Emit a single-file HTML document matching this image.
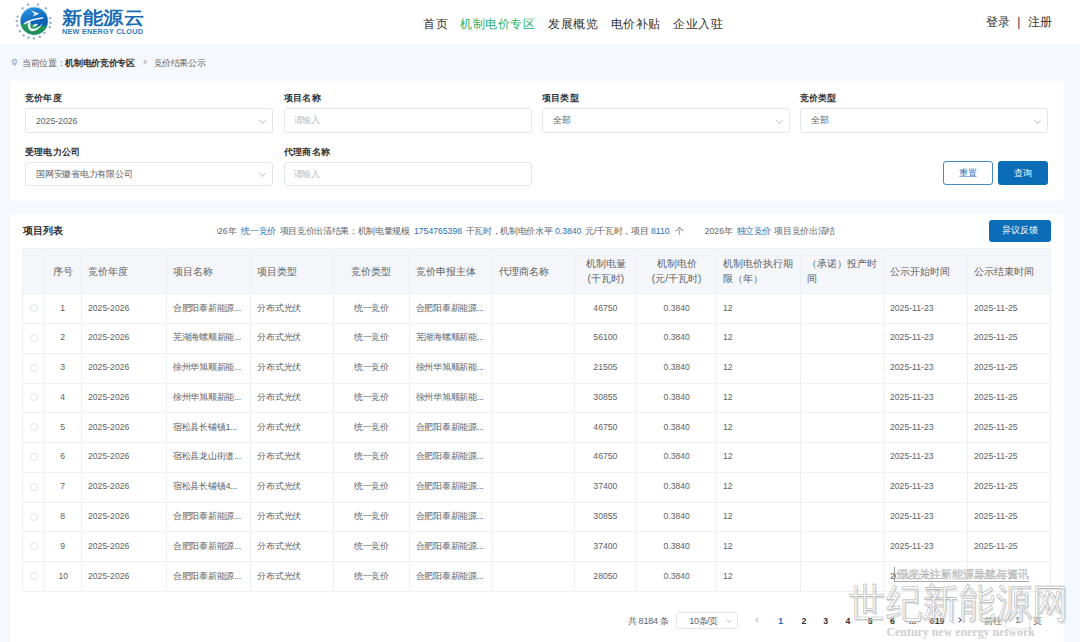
<!DOCTYPE html><html><head><meta charset="utf-8"><style>
*{margin:0;padding:0;box-sizing:border-box}
html,body{width:1080px;height:642px;overflow:hidden}
body{background:#f5f8fc;font-family:"Liberation Sans",sans-serif;color:#606266;position:relative}
.a{position:absolute;white-space:nowrap}
.card{position:absolute;background:#fff;border-radius:3px}
.lab{position:absolute;font-size:9px;letter-spacing:0.15px;font-weight:bold;color:#303133;line-height:12px;white-space:nowrap}
.inp{position:absolute;height:24.5px;border:1px solid #e2e6ec;border-radius:3px;background:#fff}
.inp>span{position:absolute;left:10px;top:0;line-height:22.5px;font-size:9px;letter-spacing:-0.25px;color:#606266;white-space:nowrap}
.inp>span.ph{color:#b8bcc4;left:8.5px}
.arr{position:absolute;right:7px;top:8.5px;width:5px;height:5px;border-right:1px solid #c8ccd4;border-bottom:1px solid #c8ccd4;transform:rotate(45deg)}
.th{position:absolute;top:249.3px;height:45px;font-size:10px;color:#606266;line-height:14.5px;display:flex;align-items:center;white-space:normal}
.td{position:absolute;height:29.77px;font-size:8.6px;color:#606266;line-height:29px;white-space:nowrap;overflow:hidden}
.cj{font-size:9px;letter-spacing:-0.26px}
.nm{display:inline-block;font-size:9.6px;transform:translateY(-0.6px) scaleX(0.9);transform-origin:0 50%}
.nmc{display:inline-block;font-size:9.6px;transform:translateY(-0.6px) scaleX(0.9);transform-origin:50% 50%}
.blue{color:#1f6fb8}
</style></head><body>

<div class="a" style="left:0;top:0;width:1080px;height:44px;background:#fff"></div>
<svg class="a" style="left:0;top:0" width="60" height="44" viewBox="0 0 60 44"><defs><linearGradient id="lg" x1="0.2" y1="0" x2="0.6" y2="1"><stop offset="0" stop-color="#2b9ae6"/><stop offset="0.6" stop-color="#0c5fb2"/></linearGradient><linearGradient id="lg2" x1="0" y1="0" x2="0" y2="1"><stop offset="0" stop-color="#23a05a"/><stop offset="1" stop-color="#1b8a4a"/></linearGradient><clipPath id="cc"><circle cx="34.2" cy="21" r="13.6"/></clipPath></defs><rect x="26.9" y="3.5" width="2.2" height="2.2" rx="0.6" fill="#7f9dbd" opacity="0.85"/><rect x="36.9" y="3.5" width="2.2" height="2.2" rx="0.6" fill="#7f9dbd" opacity="0.85"/><rect x="21.4" y="7.2" width="2.2" height="2.2" rx="0.6" fill="#7f9dbd" opacity="0.85"/><rect x="44.7" y="7.2" width="2.2" height="2.2" rx="0.6" fill="#7f9dbd" opacity="0.85"/><rect x="16.5" y="15.4" width="2.2" height="2.2" rx="0.6" fill="#7f9dbd" opacity="0.85"/><rect x="15.7" y="19.9" width="2.2" height="2.2" rx="0.6" fill="#7f9dbd" opacity="0.85"/><rect x="16.3" y="24.4" width="2.2" height="2.2" rx="0.6" fill="#7f9dbd" opacity="0.85"/><rect x="18.7" y="30.1" width="2.2" height="2.2" rx="0.6" fill="#7f9dbd" opacity="0.85"/><rect x="22.5" y="34.2" width="2.2" height="2.2" rx="0.6" fill="#7f9dbd" opacity="0.85"/><rect x="27.4" y="36.5" width="2.2" height="2.2" rx="0.6" fill="#7f9dbd" opacity="0.85"/><rect x="32.9" y="37.2" width="2.2" height="2.2" rx="0.6" fill="#7f9dbd" opacity="0.85"/><rect x="38.7" y="35.7" width="2.2" height="2.2" rx="0.6" fill="#7f9dbd" opacity="0.85"/><rect x="43.4" y="31.9" width="2.2" height="2.2" rx="0.6" fill="#7f9dbd" opacity="0.85"/><rect x="49.1" y="16.9" width="2.2" height="2.2" rx="0.6" fill="#7f9dbd" opacity="0.85"/><rect x="49.4" y="21.7" width="2.2" height="2.2" rx="0.6" fill="#7f9dbd" opacity="0.85"/><rect x="48.7" y="26.1" width="2.2" height="2.2" rx="0.6" fill="#7f9dbd" opacity="0.85"/><circle cx="34.2" cy="21" r="14.4" fill="#bfe0f5"/><g clip-path="url(#cc)"><rect x="20" y="7" width="29" height="29" fill="url(#lg)"/><path d="M20 24.5 C26 22.5, 31 23.5, 36 25.5 C41 27.5, 45 26, 49 24 L49 36 L20 36 Z" fill="url(#lg2)"/></g><path d="M30.8 10.2 L39.2 13.8 L32.6 16.4 L34.6 13.9 Z" fill="#f2f8fc"/><path d="M23.6 23.4 C28 19.8, 36 18, 43.5 17.2 L43 18.8 C36 19.6, 29 21.5, 25 24.6 Z" fill="#f2f8fc"/><path d="M28.5 21.8 C27.2 25, 27.6 29.5, 31 30.9 C35 32.4, 40.5 28, 42.8 23.2 C40 26.5, 36 29.2, 32.6 28.6 C30.2 28.1, 29.8 25.2, 30.6 22.4 Z" fill="#f2f8fc"/><path d="M32.8 25.4 C34.5 23.5, 37.5 23.2, 38.2 24.2 C37 25.8, 34.5 27, 33 26.8 Z" fill="#f2f8fc" opacity="0.9"/></svg>
<div class="a" style="left:62.3px;top:5.6px;font-size:20px;letter-spacing:0.6px;font-weight:900;color:#1b6db3;line-height:26px;transform:scaleY(0.89);transform-origin:0 0">新能源云</div>
<div class="a" style="left:62px;top:27px;font-size:7.3px;font-weight:bold;color:#2a7bc0;line-height:9px;letter-spacing:0.22px">NEW ENERGY CLOUD</div>
<div class="a" style="left:423.0px;top:15.3px;font-size:12px;letter-spacing:0.5px;line-height:18px;color:#333">首页</div>
<div class="a" style="left:460.1px;top:15.3px;font-size:12px;letter-spacing:0.5px;line-height:18px;color:#27b36b">机制电价专区</div>
<div class="a" style="left:548.4px;top:15.3px;font-size:12px;letter-spacing:0.5px;line-height:18px;color:#333">发展概览</div>
<div class="a" style="left:610.6px;top:15.3px;font-size:12px;letter-spacing:0.5px;line-height:18px;color:#333">电价补贴</div>
<div class="a" style="left:673.4px;top:15.3px;font-size:12px;letter-spacing:0.5px;line-height:18px;color:#333">企业入驻</div>
<div class="a" style="left:986px;top:13px;font-size:12px;line-height:18px;color:#333">登录 <span style="margin:0 4px">|</span> 注册</div>
<svg class="a" style="left:10.5px;top:57.5px" width="7" height="9" viewBox="0 0 7 9"><path d="M3.5 0.6 C1.8 0.6 0.6 1.9 0.6 3.5 C0.6 5.4 3.5 8.4 3.5 8.4 C3.5 8.4 6.4 5.4 6.4 3.5 C6.4 1.9 5.2 0.6 3.5 0.6 Z" fill="#b4c2d8"/><circle cx="3.5" cy="3.5" r="1.1" fill="#f5f8fc"/></svg>
<div class="a" style="left:22px;top:57px;font-size:9px;letter-spacing:-0.34px;line-height:12px;color:#666">当前位置：<b style="color:#333">机制电价竞价专区</b></div>
<div class="a" style="left:142px;top:60px;width:4px;height:4px;border-right:1px solid #aaa;border-top:1px solid #aaa;transform:rotate(45deg)"></div>
<div class="a" style="left:153.5px;top:57px;font-size:9px;letter-spacing:-0.34px;line-height:12px;color:#666">竞价结果公示</div>
<div class="card" style="left:10px;top:81px;width:1054px;height:120px"></div>
<div class="lab" style="left:25.2px;top:92px">竞价年度</div>
<div class="inp" style="left:25.2px;top:108px;width:248px"><span class=""><span class="nm" style="font-size:9.6px;letter-spacing:0;transform:translateY(0.5px) scaleX(0.9)">2025-2026</span></span><i class="arr"></i></div>
<div class="lab" style="left:284.1px;top:92px">项目名称</div>
<div class="inp" style="left:284.1px;top:108px;width:248px"><span class="ph">请输入</span></div>
<div class="lab" style="left:542.1px;top:92px">项目类型</div>
<div class="inp" style="left:542.1px;top:108px;width:248px"><span class="">全部</span><i class="arr"></i></div>
<div class="lab" style="left:800.0px;top:92px">竞价类型</div>
<div class="inp" style="left:800.0px;top:108px;width:248px"><span class="">全部</span><i class="arr"></i></div>
<div class="lab" style="left:25.2px;top:145.7px">受理电力公司</div>
<div class="inp" style="left:25.2px;top:161.5px;width:248px"><span class="">国网安徽省电力有限公司</span><i class="arr"></i></div>
<div class="lab" style="left:284.1px;top:145.7px">代理商名称</div>
<div class="inp" style="left:284.1px;top:161.5px;width:248px"><span class="ph">请输入</span></div>
<div class="a" style="left:943.4px;top:161.3px;width:49.7px;height:24px;border:1px solid #4a88c4;border-radius:3px;background:#fff;color:#1f6fb8;font-size:8.8px;line-height:22px;text-align:center">重置</div>
<div class="a" style="left:998px;top:161.3px;width:50px;height:24px;border-radius:3px;background:#0b6db8;color:#fff;font-size:8.8px;line-height:24px;text-align:center">查询</div>
<div class="card" style="left:10px;top:214px;width:1054px;height:440px"></div>
<div class="a" style="left:22.5px;top:224px;font-size:10px;font-weight:bold;line-height:14px;color:#303133">项目列表</div>
<div class="a" style="left:216.5px;top:224px;width:618px;height:14px;overflow:hidden">
<div class="a" style="left:-8.1px;top:0;font-size:8.6px;line-height:14px;color:#666">2026年</div>
<div class="a" style="left:24.8px;top:0;font-size:9px;letter-spacing:-0.34px;line-height:14px;color:#1f6fb8">统一竞价</div>
<div class="a" style="left:63.3px;top:0;font-size:9px;letter-spacing:-0.34px;line-height:14px;color:#666">项目竞价出清结果：机制电量规模</div>
<div class="a" style="left:197.0px;top:0;font-size:9.6px;transform:scaleX(0.9);transform-origin:0 50%;line-height:14px;color:#1f6fb8">1754765398</div>
<div class="a" style="left:249.3px;top:0;font-size:9px;letter-spacing:-0.34px;line-height:14px;color:#666">千瓦时，机制电价水平</div>
<div class="a" style="left:338.7px;top:0;font-size:9.6px;transform:scaleX(0.9);transform-origin:0 50%;line-height:14px;color:#1f6fb8">0.3840</div>
<div class="a" style="left:368.9px;top:0;font-size:9px;letter-spacing:-0.34px;line-height:14px;color:#666">元/千瓦时，项目</div>
<div class="a" style="left:434.7px;top:0;font-size:9.6px;transform:scaleX(0.9);transform-origin:0 50%;line-height:14px;color:#1f6fb8">8110</div>
<div class="a" style="left:458.6px;top:0;font-size:9px;letter-spacing:-0.34px;line-height:14px;color:#666">个</div>
<div class="a" style="left:488.3px;top:0;font-size:8.6px;line-height:14px;color:#666">2026年</div>
<div class="a" style="left:520.0px;top:0;font-size:9px;letter-spacing:-0.34px;line-height:14px;color:#1f6fb8">独立竞价</div>
<div class="a" style="left:557.8px;top:0;font-size:9px;letter-spacing:-0.34px;line-height:14px;color:#666">项目竞价出清结果</div>
</div>
<div class="a" style="left:989px;top:220px;width:62px;height:21.8px;border-radius:3px;background:#0b6db8;color:#fff;font-size:8.8px;line-height:21.8px;text-align:center">异议反馈</div>
<div class="a" style="left:22px;top:248px;width:1029px;height:45px;background:#f4f6f9"></div>
<div class="a" style="left:22px;top:248px;width:1029px;height:1px;background:#edf0f4"></div>
<div class="a" style="left:22px;top:293px;width:1029px;height:1px;background:#edf0f4"></div>
<div class="a" style="left:22px;top:323px;width:1029px;height:1px;background:#edf0f4"></div>
<div class="a" style="left:22px;top:353px;width:1029px;height:1px;background:#edf0f4"></div>
<div class="a" style="left:22px;top:383px;width:1029px;height:1px;background:#edf0f4"></div>
<div class="a" style="left:22px;top:412px;width:1029px;height:1px;background:#edf0f4"></div>
<div class="a" style="left:22px;top:442px;width:1029px;height:1px;background:#edf0f4"></div>
<div class="a" style="left:22px;top:472px;width:1029px;height:1px;background:#edf0f4"></div>
<div class="a" style="left:22px;top:502px;width:1029px;height:1px;background:#edf0f4"></div>
<div class="a" style="left:22px;top:531px;width:1029px;height:1px;background:#edf0f4"></div>
<div class="a" style="left:22px;top:561px;width:1029px;height:1px;background:#edf0f4"></div>
<div class="a" style="left:22px;top:591px;width:1029px;height:1px;background:#edf0f4"></div>
<div class="a" style="left:22px;top:248px;width:1px;height:344px;background:#edf0f4"></div>
<div class="a" style="left:44px;top:248px;width:1px;height:344px;background:#edf0f4"></div>
<div class="a" style="left:81px;top:248px;width:1px;height:344px;background:#edf0f4"></div>
<div class="a" style="left:166px;top:248px;width:1px;height:344px;background:#edf0f4"></div>
<div class="a" style="left:250px;top:248px;width:1px;height:344px;background:#edf0f4"></div>
<div class="a" style="left:333px;top:248px;width:1px;height:344px;background:#edf0f4"></div>
<div class="a" style="left:409px;top:248px;width:1px;height:344px;background:#edf0f4"></div>
<div class="a" style="left:492px;top:248px;width:1px;height:344px;background:#edf0f4"></div>
<div class="a" style="left:574px;top:248px;width:1px;height:344px;background:#edf0f4"></div>
<div class="a" style="left:636px;top:248px;width:1px;height:344px;background:#edf0f4"></div>
<div class="a" style="left:716px;top:248px;width:1px;height:344px;background:#edf0f4"></div>
<div class="a" style="left:800px;top:248px;width:1px;height:344px;background:#edf0f4"></div>
<div class="a" style="left:883px;top:248px;width:1px;height:344px;background:#edf0f4"></div>
<div class="a" style="left:967px;top:248px;width:1px;height:344px;background:#edf0f4"></div>
<div class="a" style="left:1050px;top:248px;width:1px;height:344px;background:#edf0f4"></div>
<div class="th" style="left:22.5px;width:21.9px;justify-content:center;text-align:center;padding:0 5px"><div></div></div>
<div class="th" style="left:44.4px;width:37.1px;justify-content:center;text-align:center;padding:0 5px"><div>序号</div></div>
<div class="th" style="left:81.5px;width:84.8px;justify-content:flex-start;text-align:left;padding:0 4.5px 0 6.7px"><div>竞价年度</div></div>
<div class="th" style="left:166.3px;width:84.3px;justify-content:flex-start;text-align:left;padding:0 4.5px 0 6.7px"><div>项目名称</div></div>
<div class="th" style="left:250.6px;width:83.0px;justify-content:flex-start;text-align:left;padding:0 4.5px 0 6.7px"><div>项目类型</div></div>
<div class="th" style="left:333.6px;width:75.4px;justify-content:center;text-align:center;padding:0 5px"><div>竞价类型</div></div>
<div class="th" style="left:409.0px;width:83.0px;justify-content:flex-start;text-align:left;padding:0 4.5px 0 6.7px"><div>竞价申报主体</div></div>
<div class="th" style="left:492.0px;width:82.7px;justify-content:flex-start;text-align:left;padding:0 4.5px 0 6.7px"><div>代理商名称</div></div>
<div class="th" style="left:574.7px;width:62.1px;justify-content:center;text-align:center;padding:0 5px"><div>机制电量<br>(千瓦时)</div></div>
<div class="th" style="left:636.8px;width:79.6px;justify-content:center;text-align:center;padding:0 5px"><div>机制电价<br>(元/千瓦时)</div></div>
<div class="th" style="left:716.4px;width:83.9px;justify-content:flex-start;text-align:left;padding:0 4.5px 0 6.7px"><div>机制电价执行期限（年）</div></div>
<div class="th" style="left:800.3px;width:82.8px;justify-content:flex-start;text-align:left;padding:0 4.5px 0 6.7px"><div>（承诺）投产时间</div></div>
<div class="th" style="left:883.1px;width:84.1px;justify-content:flex-start;text-align:left;padding:0 4.5px 0 6.7px"><div>公示开始时间</div></div>
<div class="th" style="left:967.2px;width:83.4px;justify-content:flex-start;text-align:left;padding:0 4.5px 0 6.7px"><div>公示结束时间</div></div>
<i class="a" style="left:29.5px;top:304.1px;width:8px;height:8px;border:1px solid #e0e3e9;border-radius:50%"></i>
<div class="td" style="left:44.4px;top:293.60px;width:37.1px;text-align:center;padding:0 6.7px"><span class="nmc">1</span></div>
<div class="td" style="left:81.5px;top:293.60px;width:84.8px;text-align:left;padding:0 6.7px"><span class="nm">2025-2026</span></div>
<div class="td cj" style="left:166.3px;top:293.60px;width:84.3px;text-align:left;padding:0 6.7px">合肥阳泰新能源...</div>
<div class="td cj" style="left:250.6px;top:293.60px;width:83.0px;text-align:left;padding:0 6.7px">分布式光伏</div>
<div class="td cj" style="left:333.6px;top:293.60px;width:75.4px;text-align:center;padding:0 6.7px">统一竞价</div>
<div class="td cj" style="left:409.0px;top:293.60px;width:83.0px;text-align:left;padding:0 6.7px">合肥阳泰新能源...</div>
<div class="td" style="left:574.7px;top:293.60px;width:62.1px;text-align:center;padding:0 6.7px"><span class="nmc">46750</span></div>
<div class="td" style="left:636.8px;top:293.60px;width:79.6px;text-align:center;padding:0 6.7px"><span class="nmc">0.3840</span></div>
<div class="td" style="left:716.4px;top:293.60px;width:83.9px;text-align:left;padding:0 6.7px"><span class="nm">12</span></div>
<div class="td" style="left:883.1px;top:293.60px;width:84.1px;text-align:left;padding:0 6.7px"><span class="nm">2025-11-23</span></div>
<div class="td" style="left:967.2px;top:293.60px;width:83.4px;text-align:left;padding:0 6.7px"><span class="nm">2025-11-25</span></div>
<i class="a" style="left:29.5px;top:333.9px;width:8px;height:8px;border:1px solid #e0e3e9;border-radius:50%"></i>
<div class="td" style="left:44.4px;top:323.37px;width:37.1px;text-align:center;padding:0 6.7px"><span class="nmc">2</span></div>
<div class="td" style="left:81.5px;top:323.37px;width:84.8px;text-align:left;padding:0 6.7px"><span class="nm">2025-2026</span></div>
<div class="td cj" style="left:166.3px;top:323.37px;width:84.3px;text-align:left;padding:0 6.7px">芜湖海螺顺新能...</div>
<div class="td cj" style="left:250.6px;top:323.37px;width:83.0px;text-align:left;padding:0 6.7px">分布式光伏</div>
<div class="td cj" style="left:333.6px;top:323.37px;width:75.4px;text-align:center;padding:0 6.7px">统一竞价</div>
<div class="td cj" style="left:409.0px;top:323.37px;width:83.0px;text-align:left;padding:0 6.7px">芜湖海螺顺新能...</div>
<div class="td" style="left:574.7px;top:323.37px;width:62.1px;text-align:center;padding:0 6.7px"><span class="nmc">56100</span></div>
<div class="td" style="left:636.8px;top:323.37px;width:79.6px;text-align:center;padding:0 6.7px"><span class="nmc">0.3840</span></div>
<div class="td" style="left:716.4px;top:323.37px;width:83.9px;text-align:left;padding:0 6.7px"><span class="nm">12</span></div>
<div class="td" style="left:883.1px;top:323.37px;width:84.1px;text-align:left;padding:0 6.7px"><span class="nm">2025-11-23</span></div>
<div class="td" style="left:967.2px;top:323.37px;width:83.4px;text-align:left;padding:0 6.7px"><span class="nm">2025-11-25</span></div>
<i class="a" style="left:29.5px;top:363.6px;width:8px;height:8px;border:1px solid #e0e3e9;border-radius:50%"></i>
<div class="td" style="left:44.4px;top:353.14px;width:37.1px;text-align:center;padding:0 6.7px"><span class="nmc">3</span></div>
<div class="td" style="left:81.5px;top:353.14px;width:84.8px;text-align:left;padding:0 6.7px"><span class="nm">2025-2026</span></div>
<div class="td cj" style="left:166.3px;top:353.14px;width:84.3px;text-align:left;padding:0 6.7px">徐州华旭顺新能...</div>
<div class="td cj" style="left:250.6px;top:353.14px;width:83.0px;text-align:left;padding:0 6.7px">分布式光伏</div>
<div class="td cj" style="left:333.6px;top:353.14px;width:75.4px;text-align:center;padding:0 6.7px">统一竞价</div>
<div class="td cj" style="left:409.0px;top:353.14px;width:83.0px;text-align:left;padding:0 6.7px">徐州华旭顺新能...</div>
<div class="td" style="left:574.7px;top:353.14px;width:62.1px;text-align:center;padding:0 6.7px"><span class="nmc">21505</span></div>
<div class="td" style="left:636.8px;top:353.14px;width:79.6px;text-align:center;padding:0 6.7px"><span class="nmc">0.3840</span></div>
<div class="td" style="left:716.4px;top:353.14px;width:83.9px;text-align:left;padding:0 6.7px"><span class="nm">12</span></div>
<div class="td" style="left:883.1px;top:353.14px;width:84.1px;text-align:left;padding:0 6.7px"><span class="nm">2025-11-23</span></div>
<div class="td" style="left:967.2px;top:353.14px;width:83.4px;text-align:left;padding:0 6.7px"><span class="nm">2025-11-25</span></div>
<i class="a" style="left:29.5px;top:393.4px;width:8px;height:8px;border:1px solid #e0e3e9;border-radius:50%"></i>
<div class="td" style="left:44.4px;top:382.91px;width:37.1px;text-align:center;padding:0 6.7px"><span class="nmc">4</span></div>
<div class="td" style="left:81.5px;top:382.91px;width:84.8px;text-align:left;padding:0 6.7px"><span class="nm">2025-2026</span></div>
<div class="td cj" style="left:166.3px;top:382.91px;width:84.3px;text-align:left;padding:0 6.7px">徐州华旭顺新能...</div>
<div class="td cj" style="left:250.6px;top:382.91px;width:83.0px;text-align:left;padding:0 6.7px">分布式光伏</div>
<div class="td cj" style="left:333.6px;top:382.91px;width:75.4px;text-align:center;padding:0 6.7px">统一竞价</div>
<div class="td cj" style="left:409.0px;top:382.91px;width:83.0px;text-align:left;padding:0 6.7px">徐州华旭顺新能...</div>
<div class="td" style="left:574.7px;top:382.91px;width:62.1px;text-align:center;padding:0 6.7px"><span class="nmc">30855</span></div>
<div class="td" style="left:636.8px;top:382.91px;width:79.6px;text-align:center;padding:0 6.7px"><span class="nmc">0.3840</span></div>
<div class="td" style="left:716.4px;top:382.91px;width:83.9px;text-align:left;padding:0 6.7px"><span class="nm">12</span></div>
<div class="td" style="left:883.1px;top:382.91px;width:84.1px;text-align:left;padding:0 6.7px"><span class="nm">2025-11-23</span></div>
<div class="td" style="left:967.2px;top:382.91px;width:83.4px;text-align:left;padding:0 6.7px"><span class="nm">2025-11-25</span></div>
<i class="a" style="left:29.5px;top:423.2px;width:8px;height:8px;border:1px solid #e0e3e9;border-radius:50%"></i>
<div class="td" style="left:44.4px;top:412.68px;width:37.1px;text-align:center;padding:0 6.7px"><span class="nmc">5</span></div>
<div class="td" style="left:81.5px;top:412.68px;width:84.8px;text-align:left;padding:0 6.7px"><span class="nm">2025-2026</span></div>
<div class="td cj" style="left:166.3px;top:412.68px;width:84.3px;text-align:left;padding:0 6.7px">宿松县长铺镇1...</div>
<div class="td cj" style="left:250.6px;top:412.68px;width:83.0px;text-align:left;padding:0 6.7px">分布式光伏</div>
<div class="td cj" style="left:333.6px;top:412.68px;width:75.4px;text-align:center;padding:0 6.7px">统一竞价</div>
<div class="td cj" style="left:409.0px;top:412.68px;width:83.0px;text-align:left;padding:0 6.7px">合肥阳泰新能源...</div>
<div class="td" style="left:574.7px;top:412.68px;width:62.1px;text-align:center;padding:0 6.7px"><span class="nmc">46750</span></div>
<div class="td" style="left:636.8px;top:412.68px;width:79.6px;text-align:center;padding:0 6.7px"><span class="nmc">0.3840</span></div>
<div class="td" style="left:716.4px;top:412.68px;width:83.9px;text-align:left;padding:0 6.7px"><span class="nm">12</span></div>
<div class="td" style="left:883.1px;top:412.68px;width:84.1px;text-align:left;padding:0 6.7px"><span class="nm">2025-11-23</span></div>
<div class="td" style="left:967.2px;top:412.68px;width:83.4px;text-align:left;padding:0 6.7px"><span class="nm">2025-11-25</span></div>
<i class="a" style="left:29.5px;top:453.0px;width:8px;height:8px;border:1px solid #e0e3e9;border-radius:50%"></i>
<div class="td" style="left:44.4px;top:442.45px;width:37.1px;text-align:center;padding:0 6.7px"><span class="nmc">6</span></div>
<div class="td" style="left:81.5px;top:442.45px;width:84.8px;text-align:left;padding:0 6.7px"><span class="nm">2025-2026</span></div>
<div class="td cj" style="left:166.3px;top:442.45px;width:84.3px;text-align:left;padding:0 6.7px">宿松县龙山街道...</div>
<div class="td cj" style="left:250.6px;top:442.45px;width:83.0px;text-align:left;padding:0 6.7px">分布式光伏</div>
<div class="td cj" style="left:333.6px;top:442.45px;width:75.4px;text-align:center;padding:0 6.7px">统一竞价</div>
<div class="td cj" style="left:409.0px;top:442.45px;width:83.0px;text-align:left;padding:0 6.7px">合肥阳泰新能源...</div>
<div class="td" style="left:574.7px;top:442.45px;width:62.1px;text-align:center;padding:0 6.7px"><span class="nmc">46750</span></div>
<div class="td" style="left:636.8px;top:442.45px;width:79.6px;text-align:center;padding:0 6.7px"><span class="nmc">0.3840</span></div>
<div class="td" style="left:716.4px;top:442.45px;width:83.9px;text-align:left;padding:0 6.7px"><span class="nm">12</span></div>
<div class="td" style="left:883.1px;top:442.45px;width:84.1px;text-align:left;padding:0 6.7px"><span class="nm">2025-11-23</span></div>
<div class="td" style="left:967.2px;top:442.45px;width:83.4px;text-align:left;padding:0 6.7px"><span class="nm">2025-11-25</span></div>
<i class="a" style="left:29.5px;top:482.7px;width:8px;height:8px;border:1px solid #e0e3e9;border-radius:50%"></i>
<div class="td" style="left:44.4px;top:472.22px;width:37.1px;text-align:center;padding:0 6.7px"><span class="nmc">7</span></div>
<div class="td" style="left:81.5px;top:472.22px;width:84.8px;text-align:left;padding:0 6.7px"><span class="nm">2025-2026</span></div>
<div class="td cj" style="left:166.3px;top:472.22px;width:84.3px;text-align:left;padding:0 6.7px">宿松县长铺镇4...</div>
<div class="td cj" style="left:250.6px;top:472.22px;width:83.0px;text-align:left;padding:0 6.7px">分布式光伏</div>
<div class="td cj" style="left:333.6px;top:472.22px;width:75.4px;text-align:center;padding:0 6.7px">统一竞价</div>
<div class="td cj" style="left:409.0px;top:472.22px;width:83.0px;text-align:left;padding:0 6.7px">合肥阳泰新能源...</div>
<div class="td" style="left:574.7px;top:472.22px;width:62.1px;text-align:center;padding:0 6.7px"><span class="nmc">37400</span></div>
<div class="td" style="left:636.8px;top:472.22px;width:79.6px;text-align:center;padding:0 6.7px"><span class="nmc">0.3840</span></div>
<div class="td" style="left:716.4px;top:472.22px;width:83.9px;text-align:left;padding:0 6.7px"><span class="nm">12</span></div>
<div class="td" style="left:883.1px;top:472.22px;width:84.1px;text-align:left;padding:0 6.7px"><span class="nm">2025-11-23</span></div>
<div class="td" style="left:967.2px;top:472.22px;width:83.4px;text-align:left;padding:0 6.7px"><span class="nm">2025-11-25</span></div>
<i class="a" style="left:29.5px;top:512.5px;width:8px;height:8px;border:1px solid #e0e3e9;border-radius:50%"></i>
<div class="td" style="left:44.4px;top:501.99px;width:37.1px;text-align:center;padding:0 6.7px"><span class="nmc">8</span></div>
<div class="td" style="left:81.5px;top:501.99px;width:84.8px;text-align:left;padding:0 6.7px"><span class="nm">2025-2026</span></div>
<div class="td cj" style="left:166.3px;top:501.99px;width:84.3px;text-align:left;padding:0 6.7px">合肥阳泰新能源...</div>
<div class="td cj" style="left:250.6px;top:501.99px;width:83.0px;text-align:left;padding:0 6.7px">分布式光伏</div>
<div class="td cj" style="left:333.6px;top:501.99px;width:75.4px;text-align:center;padding:0 6.7px">统一竞价</div>
<div class="td cj" style="left:409.0px;top:501.99px;width:83.0px;text-align:left;padding:0 6.7px">合肥阳泰新能源...</div>
<div class="td" style="left:574.7px;top:501.99px;width:62.1px;text-align:center;padding:0 6.7px"><span class="nmc">30855</span></div>
<div class="td" style="left:636.8px;top:501.99px;width:79.6px;text-align:center;padding:0 6.7px"><span class="nmc">0.3840</span></div>
<div class="td" style="left:716.4px;top:501.99px;width:83.9px;text-align:left;padding:0 6.7px"><span class="nm">12</span></div>
<div class="td" style="left:883.1px;top:501.99px;width:84.1px;text-align:left;padding:0 6.7px"><span class="nm">2025-11-23</span></div>
<div class="td" style="left:967.2px;top:501.99px;width:83.4px;text-align:left;padding:0 6.7px"><span class="nm">2025-11-25</span></div>
<i class="a" style="left:29.5px;top:542.3px;width:8px;height:8px;border:1px solid #e0e3e9;border-radius:50%"></i>
<div class="td" style="left:44.4px;top:531.76px;width:37.1px;text-align:center;padding:0 6.7px"><span class="nmc">9</span></div>
<div class="td" style="left:81.5px;top:531.76px;width:84.8px;text-align:left;padding:0 6.7px"><span class="nm">2025-2026</span></div>
<div class="td cj" style="left:166.3px;top:531.76px;width:84.3px;text-align:left;padding:0 6.7px">合肥阳泰新能源...</div>
<div class="td cj" style="left:250.6px;top:531.76px;width:83.0px;text-align:left;padding:0 6.7px">分布式光伏</div>
<div class="td cj" style="left:333.6px;top:531.76px;width:75.4px;text-align:center;padding:0 6.7px">统一竞价</div>
<div class="td cj" style="left:409.0px;top:531.76px;width:83.0px;text-align:left;padding:0 6.7px">合肥阳泰新能源...</div>
<div class="td" style="left:574.7px;top:531.76px;width:62.1px;text-align:center;padding:0 6.7px"><span class="nmc">37400</span></div>
<div class="td" style="left:636.8px;top:531.76px;width:79.6px;text-align:center;padding:0 6.7px"><span class="nmc">0.3840</span></div>
<div class="td" style="left:716.4px;top:531.76px;width:83.9px;text-align:left;padding:0 6.7px"><span class="nm">12</span></div>
<div class="td" style="left:883.1px;top:531.76px;width:84.1px;text-align:left;padding:0 6.7px"><span class="nm">2025-11-23</span></div>
<div class="td" style="left:967.2px;top:531.76px;width:83.4px;text-align:left;padding:0 6.7px"><span class="nm">2025-11-25</span></div>
<i class="a" style="left:29.5px;top:572.0px;width:8px;height:8px;border:1px solid #e0e3e9;border-radius:50%"></i>
<div class="td" style="left:44.4px;top:561.53px;width:37.1px;text-align:center;padding:0 6.7px"><span class="nmc">10</span></div>
<div class="td" style="left:81.5px;top:561.53px;width:84.8px;text-align:left;padding:0 6.7px"><span class="nm">2025-2026</span></div>
<div class="td cj" style="left:166.3px;top:561.53px;width:84.3px;text-align:left;padding:0 6.7px">合肥阳泰新能源...</div>
<div class="td cj" style="left:250.6px;top:561.53px;width:83.0px;text-align:left;padding:0 6.7px">分布式光伏</div>
<div class="td cj" style="left:333.6px;top:561.53px;width:75.4px;text-align:center;padding:0 6.7px">统一竞价</div>
<div class="td cj" style="left:409.0px;top:561.53px;width:83.0px;text-align:left;padding:0 6.7px">合肥阳泰新能源...</div>
<div class="td" style="left:574.7px;top:561.53px;width:62.1px;text-align:center;padding:0 6.7px"><span class="nmc">28050</span></div>
<div class="td" style="left:636.8px;top:561.53px;width:79.6px;text-align:center;padding:0 6.7px"><span class="nmc">0.3840</span></div>
<div class="td" style="left:716.4px;top:561.53px;width:83.9px;text-align:left;padding:0 6.7px"><span class="nm">12</span></div>
<div class="td" style="left:883.1px;top:561.53px;width:84.1px;text-align:left;padding:0 6.7px"><span class="nm">2025-11-23</span></div>
<div class="td" style="left:967.2px;top:561.53px;width:83.4px;text-align:left;padding:0 6.7px"><span class="nm">2025-11-25</span></div>
<div class="a" style="left:627.5px;top:615px;font-size:9px;letter-spacing:-0.2px;line-height:12px;color:#606266">共 8184 条</div>
<div class="inp" style="left:676.3px;top:612px;width:61.7px;height:17.2px"><span style="left:12px;top:1px;line-height:15.2px;letter-spacing:-0.4px">10条/页</span><i class="arr" style="top:5px;right:5.5px;width:4px;height:4px"></i></div>
<div class="a" style="left:756px;top:618px;width:4px;height:4px;border-left:1px solid #c0c4cc;border-bottom:1px solid #c0c4cc;transform:rotate(45deg)"></div>
<div class="a" style="left:778.3px;top:615px;font-size:8.7px;font-weight:bold;line-height:12px;color:#1f6fb8">1</div>
<div class="a" style="left:801.4px;top:615px;font-size:8.7px;font-weight:bold;line-height:12px;color:#303133">2</div>
<div class="a" style="left:823.2px;top:615px;font-size:8.7px;font-weight:bold;line-height:12px;color:#303133">3</div>
<div class="a" style="left:845.4px;top:615px;font-size:8.7px;font-weight:bold;line-height:12px;color:#303133">4</div>
<div class="a" style="left:867.8px;top:615px;font-size:8.7px;font-weight:bold;line-height:12px;color:#303133">5</div>
<div class="a" style="left:890.0px;top:615px;font-size:8.7px;font-weight:bold;line-height:12px;color:#303133">6</div>
<div class="a" style="left:909.0px;top:615px;font-size:8.7px;font-weight:bold;line-height:12px;color:#303133">...</div>
<div class="a" style="left:929.8px;top:615px;font-size:8.7px;font-weight:bold;line-height:12px;color:#303133">619</div>
<div class="a" style="left:957px;top:618px;width:4px;height:4px;border-right:1px solid #606266;border-top:1px solid #606266;transform:rotate(45deg)"></div>
<div class="a" style="left:984px;top:615px;font-size:9px;letter-spacing:-0.5px;line-height:12px;color:#606266">前往</div>
<div class="inp" style="left:1005px;top:612px;width:25px;height:17.2px"><span style="left:0;width:23px;text-align:center;line-height:15.2px;font-size:8.7px">1</span></div>
<div class="a" style="left:1033px;top:615px;font-size:9px;line-height:12px;color:#606266">页</div>
<div class="a" style="left:894px;top:567px;width:1px;height:14px;background:#9a9a9a"></div>
<div class="a" style="left:894px;top:580.5px;width:135px;height:1px;background:#a8a8a8"></div>
<div class="a" style="left:896px;top:567px;width:133px;height:13.5px;background:rgba(255,255,255,.55)"></div>
<div class="a" style="left:897px;top:566px;font-size:11.2px;line-height:16px;color:rgba(255,255,255,.5);-webkit-text-stroke:0.4px #adadad">深度关注新能源导航与资讯</div>
<div class="a" style="left:849px;top:580px;font-size:36.7px;line-height:44px;color:rgba(255,255,255,.35);-webkit-text-stroke:0.55px #b3b3b3;text-shadow:1.5px 1.5px 0 rgba(200,200,200,.5);transform:scale(0.99,1.1);transform-origin:0 0">世纪新能源网</div>
<div class="a" style="left:886.5px;top:623.8px;font-family:&quot;Liberation Serif&quot;,serif;font-weight:bold;font-size:11.9px;line-height:16px;color:#cfcfcf">Century new energy network</div>
</body></html>
